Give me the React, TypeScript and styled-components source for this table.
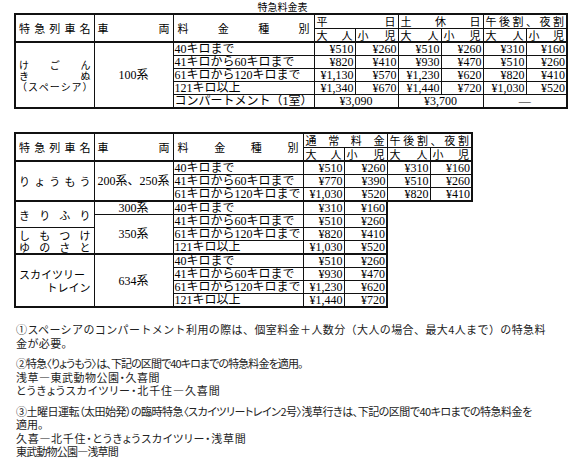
import React from 'react';
import styled, { createGlobalStyle } from 'styled-components';

const GlobalStyle = createGlobalStyle`
  html, body {
    margin: 0;
    padding: 0;
    background: #fff;
  }
  body {
    font-family: "Liberation Serif", "Noto Sans CJK JP", serif;
    color: #000;
  }
`;

const Page = styled.div`
  width: 570px;
  height: 464px;
  overflow: hidden;
  padding: 1px 0 0 14px;
  box-sizing: border-box;
`;

const Title = styled.div`
  width: 537px;
  height: 12px;
  text-align: center;
  font-family: "Noto Sans CJK JP", sans-serif;
  font-size: 10px;
  line-height: 12px;
`;

const Table = styled.table<{ $gap?: number }>`
  border-collapse: collapse;
  table-layout: fixed;
  margin-top: ${(p) => p.$gap ?? 0}px;
  font-size: 12px;
`;

const Col = styled.col<{ $w: number }>`
  width: ${(p) => p.$w}px;
`;

const Tr = styled.tr<{ $h: number }>`
  height: ${(p) => p.$h}px;
`;

type CellProps = {
  $t?: number;
  $r?: number;
  $b?: number;
  $l?: number;
  $align?: 'left' | 'right' | 'center';
  $v?: 'top' | 'middle' | 'bottom';
  $size?: number;
};

const Td = styled.td<CellProps>`
  padding: 0 1px;
  border-style: solid;
  border-color: #111;
  border-width: ${(p) =>
    `${p.$t ?? 1}px ${p.$r ?? 1}px ${p.$b ?? 1}px ${p.$l ?? 1}px`};
  text-align: ${(p) => p.$align ?? 'left'};
  vertical-align: ${(p) => p.$v ?? 'bottom'};
  font-size: ${(p) => p.$size ?? 12}px;
  line-height: 12px;
  white-space: nowrap;
  overflow: hidden;
`;

const HeadCell = styled(Td)`
  font-family: "Noto Sans CJK JP", sans-serif;
  vertical-align: middle;
`;

const SpreadBox = styled.span<{ $pad?: number }>`
  display: flex;
  justify-content: space-between;
  padding: 0 ${(p) => p.$pad ?? 1}px;
`;

const Spread = ({ text, pad }: { text: string; pad?: number }) => (
  <SpreadBox $pad={pad}>
    {[...text].map((c, i) => (
      <span key={i}>{c}</span>
    ))}
  </SpreadBox>
);

const Stack = styled.div<{ $lh: number }>`
  display: flex;
  flex-direction: column;
  line-height: ${(p) => p.$lh}px;
  font-family: "Noto Sans CJK JP", sans-serif;
`;

const Lead = styled.span`
  text-align: left;
  padding-left: 2px;
`;

const Tail = styled.span`
  text-align: right;
  padding-right: 2px;
`;

const Notes = styled.div`
  margin-top: 15px;
  padding-left: 2px;
  font-family: "Noto Sans CJK JP", sans-serif;
  font-size: 11px;
  color: #222;
  display: flex;
  flex-direction: column;
  gap: 7px;
`;

const Para = styled.div`
  display: flex;
  flex-direction: column;
`;

const Line = styled.div<{ $track?: number; $palt?: boolean }>`
  height: 13.5px;
  line-height: 13.5px;
  white-space: nowrap;
  letter-spacing: ${(p) => p.$track ?? 0}px;
  font-feature-settings: ${(p) => (p.$palt ? '"palt"' : 'normal')};
`;

const T = 2;

const kinds = [
  '40キロまで',
  '41キロから60キロまで',
  '61キロから120キロまで',
  '121キロ以上',
];

const table1Prices = [
  ['¥510', '¥260', '¥510', '¥260', '¥310', '¥160'],
  ['¥820', '¥410', '¥930', '¥470', '¥510', '¥260'],
  ['¥1,130', '¥570', '¥1,230', '¥620', '¥820', '¥410'],
  ['¥1,340', '¥670', '¥1,440', '¥720', '¥1,030', '¥520'],
];

const Widths1 = [79, 79, 130, 41, 43, 43, 42, 43, 41];

const Header = ({ groups }: { groups: string[] }) => (
  <>
    <Tr $h={14}>
      <HeadCell rowSpan={2} $t={T} $l={T} $b={T} $size={11}>
        <Spread text="特急列車名" pad={2} />
      </HeadCell>
      <HeadCell rowSpan={2} $t={T} $b={T} $size={11}>
        <Spread text="車両" pad={2} />
      </HeadCell>
      <HeadCell rowSpan={2} $t={T} $b={T} $size={11}>
        <Spread text="料金種別" pad={3} />
      </HeadCell>
      {groups.map((g, i) => (
        <HeadCell
          key={g}
          colSpan={2}
          $t={T}
          $r={i === groups.length - 1 ? T : 1}
          $size={11}
        >
          <Spread text={g} />
        </HeadCell>
      ))}
    </Tr>
    <Tr $h={14}>
      {groups.map((g, i) => (
        <React.Fragment key={g}>
          <HeadCell $b={T} $size={11}>
            <Spread text="大人" />
          </HeadCell>
          <HeadCell $b={T} $r={i === groups.length - 1 ? T : 1} $size={11}>
            <Spread text="小児" />
          </HeadCell>
        </React.Fragment>
      ))}
    </Tr>
  </>
);

const Prices = ({ values, last, bottom }: { values: string[]; last: number; bottom?: boolean }) => (
  <>
    {values.map((v, i) => (
      <Td key={i} $align="right" $r={i === last ? T : 1} $b={bottom ? T : 1}>
        {v}
      </Td>
    ))}
  </>
);

const FirstTable = () => (
  <Table>
    <colgroup>
      {Widths1.map((w, i) => (
        <Col key={i} $w={w} />
      ))}
    </colgroup>
    <tbody>
      <Header groups={['平日', '土休日', '午後割、夜割']} />
      {kinds.map((k, r) => (
        <Tr $h={13} key={k}>
          {r === 0 && (
            <>
              <Td rowSpan={5} $l={T} $b={T} $v="middle" $size={10}>
                <Stack $lh={11}>
                  <Spread text="けごん" pad={2} />
                  <Spread text="きぬ" pad={2} />
                  <Spread text="（スペーシア）" pad={0} />
                </Stack>
              </Td>
              <Td rowSpan={5} $b={T} $v="middle" $align="center">
                100系
              </Td>
            </>
          )}
          <Td>{k}</Td>
          <Prices values={table1Prices[r]} last={5} />
        </Tr>
      ))}
      <Tr $h={13}>
        <Td $b={T}>コンパートメント（1室）</Td>
        <Td colSpan={2} $b={T} $align="center">
          ¥3,090
        </Td>
        <Td colSpan={2} $b={T} $align="center">
          ¥3,700
        </Td>
        <Td colSpan={2} $b={T} $r={T} $align="center">
          —
        </Td>
      </Tr>
    </tbody>
  </Table>
);

const ryomo = [
  ['¥510', '¥260', '¥310', '¥160'],
  ['¥770', '¥390', '¥510', '¥260'],
  ['¥1,030', '¥520', '¥820', '¥410'],
];

const kirifuri = [
  ['¥310', '¥160'],
  ['¥510', '¥260'],
  ['¥820', '¥410'],
  ['¥1,030', '¥520'],
];

const skytree = [
  ['¥510', '¥260'],
  ['¥930', '¥470'],
  ['¥1,230', '¥620'],
  ['¥1,440', '¥720'],
];

const SecondTable = () => (
  <Table $gap={23}>
    <colgroup>
      {Widths1.slice(0, 7).map((w, i) => (
        <Col key={i} $w={w} />
      ))}
    </colgroup>
    <tbody>
      <Header groups={['通常料金', '午後割、夜割']} />

      {ryomo.map((vals, r) => (
        <Tr $h={13} key={'r' + r}>
          {r === 0 && (
            <>
              <Td rowSpan={3} $l={T} $b={T} $v="middle" $size={11}>
                <Stack $lh={12}>
                  <Spread text="りょうもう" pad={2} />
                </Stack>
              </Td>
              <Td rowSpan={3} $b={T} $v="middle" $align="center">
                200系、250系
              </Td>
            </>
          )}
          <Td $b={r === 2 ? T : 1}>{kinds[r]}</Td>
          <Prices values={vals} last={3} bottom={r === 2} />
        </Tr>
      ))}

      {kirifuri.map((vals, r) => (
        <Tr $h={13} key={'k' + r}>
          {r === 0 && (
            <>
              <Td rowSpan={2} $l={T} $v="middle" $size={11}>
                <Stack $lh={12}>
                  <Spread text="きりふり" pad={2} />
                </Stack>
              </Td>
              <Td $align="center">300系</Td>
            </>
          )}
          {r === 1 && (
            <Td rowSpan={3} $b={T} $v="middle" $align="center">
              350系
            </Td>
          )}
          {r === 2 && (
            <Td rowSpan={2} $l={T} $b={T} $v="middle" $size={11}>
              <Stack $lh={12}>
                <Spread text="しもつけ" pad={2} />
                <Spread text="ゆのさと" pad={2} />
              </Stack>
            </Td>
          )}
          <Td $b={r === 3 ? T : 1}>{kinds[r]}</Td>
          <Prices values={vals} last={1} bottom={r === 3} />
        </Tr>
      ))}

      {skytree.map((vals, r) => (
        <Tr $h={13} key={'s' + r}>
          {r === 0 && (
            <>
              <Td rowSpan={4} $l={T} $b={T} $v="middle" $size={11}>
                <Stack $lh={13}>
                  <Lead>スカイツリー</Lead>
                  <Tail>トレイン</Tail>
                </Stack>
              </Td>
              <Td rowSpan={4} $b={T} $v="middle" $align="center">
                634系
              </Td>
            </>
          )}
          <Td $b={r === 3 ? T : 1}>{kinds[r]}</Td>
          <Prices values={vals} last={1} bottom={r === 3} />
        </Tr>
      ))}
    </tbody>
  </Table>
);

export default function App() {
  return (
    <>
      <GlobalStyle />
      <Page>
        <Title>特急料金表</Title>
        <FirstTable />
        <SecondTable />
        <Notes>
          <Para>
            <Line $track={0.4}>
              ①スペーシアのコンパートメント利用の際は、個室料金＋人数分（大人の場合、最大4人まで）の特急料
            </Line>
            <Line $track={0.4}>金が必要。</Line>
          </Para>
          <Para>
            <Line $palt $track={-0.9}>
              ②特急〈りょうもう〉は、下記の区間で40キロまでの特急料金を適用。
            </Line>
            <Line $palt $track={0.5}>浅草―東武動物公園・久喜間</Line>
            <Line $palt $track={0.9}>とうきょうスカイツリー・北千住―久喜間</Line>
          </Para>
          <Para>
            <Line $palt $track={-0.5}>
              ③土曜日運転（太田始発）の臨時特急〈スカイツリートレイン2号〉浅草行きは、下記の区間で40キロまでの特急料金を
            </Line>
            <Line $palt>適用。</Line>
            <Line $palt $track={0.7}>久喜―北千住・とうきょうスカイツリー・浅草間</Line>
            <Line $palt $track={-0.8}>東武動物公園―浅草間</Line>
          </Para>
        </Notes>
      </Page>
    </>
  );
}
